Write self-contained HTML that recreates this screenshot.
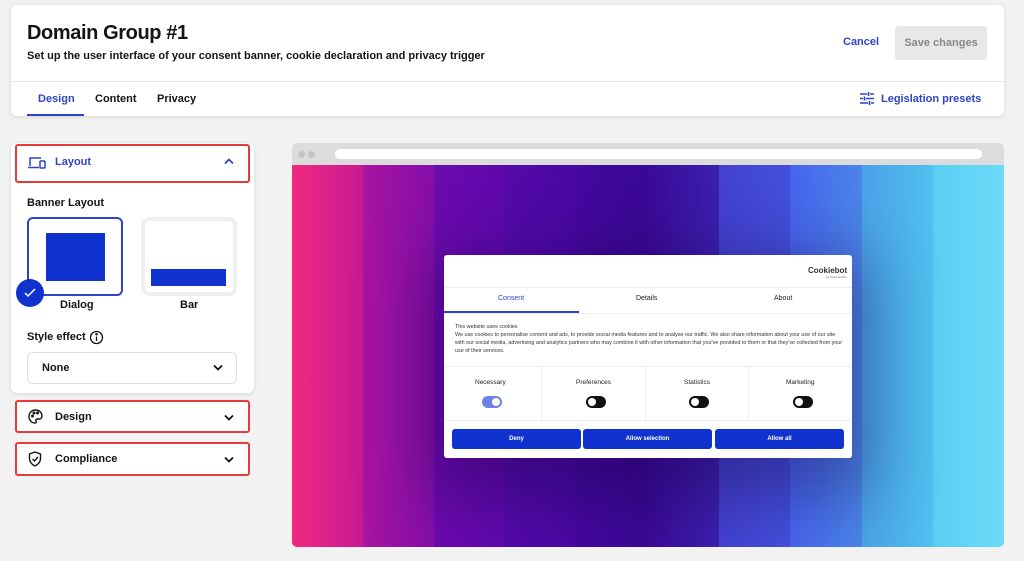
<!DOCTYPE html>
<html><head><style>
*{box-sizing:border-box;margin:0;padding:0}
body{width:1024px;height:561px;background:#f2f2f2;font-family:"Liberation Sans",sans-serif;position:relative;overflow:hidden;color:#141414}
.a{position:absolute}
.card{background:#fff;border-radius:6px;box-shadow:0 1px 4px rgba(0,0,0,.12)}
.red{border:2px solid #e53b3b;border-radius:3px;background:#fff}
.b{font-weight:bold}
.stripe{position:absolute;top:0;bottom:0}
.tg{position:absolute;width:20px;height:12px;border-radius:6px;background:#111}
.tg:after{content:"";position:absolute;left:2px;top:2px;width:8px;height:8px;border-radius:50%;background:#fff}
.btn{position:absolute;top:429px;height:20px;background:#1032cf;border-radius:3px;color:#fff;font-size:6px;font-weight:bold;text-align:center;line-height:20px}
</style></head><body>
<div class="a card" style="left:11px;top:5px;width:993px;height:111px"></div>
<div class="a b" style="left:27px;top:22px;font-size:20px;letter-spacing:-0.4px">Domain Group #1</div>
<div class="a b" style="left:27px;top:50px;font-size:11px">Set up the user interface of your consent banner, cookie declaration and privacy trigger</div>
<div class="a b" style="left:843px;top:36px;font-size:11px;color:#2d44c7">Cancel</div>
<div class="a b" style="left:895px;top:26px;width:92px;height:34px;background:#e8e8e8;border-radius:3px;color:#888;font-size:11px;line-height:34px;text-align:center">Save changes</div>
<div class="a" style="left:11px;top:81px;width:993px;height:1px;background:#e6e6e6"></div>
<div class="a b" style="left:38px;top:93px;font-size:11px;color:#2d44c7">Design</div>
<div class="a" style="left:27px;top:114px;width:57px;height:2px;background:#2d44c7"></div>
<div class="a b" style="left:95px;top:93px;font-size:11px">Content</div>
<div class="a b" style="left:157px;top:93px;font-size:11px">Privacy</div>
<svg class="a" style="left:860px;top:92px" width="14" height="13" viewBox="0 0 14 13" fill="none" stroke="#2d44c7" stroke-width="1.6"><path d="M0 2h7M10 2h4M8.5 0v4M0 6.5h3M6 6.5h8M4.5 4.5v4M0 11h8M11 11h3M9.5 9v4"/></svg>
<div class="a b" style="left:881px;top:93px;font-size:11px;color:#2d44c7">Legislation presets</div>

<div class="a card" style="left:11px;top:143px;width:243px;height:250px"></div>
<div class="a red" style="left:15px;top:144px;width:235px;height:39px"></div>
<svg class="a" style="left:28px;top:157px" width="18" height="12" viewBox="0 0 18 12" fill="none" stroke="#2d44c7" stroke-width="1.5"><path d="M2 9V1h11M0 10.5h11"/><rect x="12" y="4" width="5" height="7" rx="1"/></svg>
<div class="a b" style="left:55px;top:156px;font-size:11px;color:#2d44c7">Layout</div>
<svg class="a" style="left:224px;top:158px" width="10" height="7" viewBox="0 0 10 7" fill="none" stroke="#2d44c7" stroke-width="1.8"><path d="M1 5.5l4-4 4 4"/></svg>
<div class="a b" style="left:27px;top:197px;font-size:11px">Banner Layout</div>
<div class="a" style="left:27px;top:217px;width:96px;height:79px;border:2px solid #2d44c7;border-radius:6px;background:#fff"></div>
<div class="a" style="left:46px;top:233px;width:59px;height:48px;background:#1032cf"></div>
<div class="a" style="left:141px;top:217px;width:96px;height:79px;border:4px solid #efefef;border-radius:8px;background:#fff"></div>
<div class="a" style="left:151px;top:269px;width:75px;height:17px;background:#1032cf"></div>
<div class="a" style="left:16px;top:279px;width:28px;height:28px;border-radius:50%;background:#1032cf"></div>
<svg class="a" style="left:23px;top:287px" width="14" height="11" viewBox="0 0 14 11" fill="none" stroke="#fff" stroke-width="1.5"><path d="M2 6l3 3 7-7"/></svg>
<div class="a b" style="left:60px;top:299px;font-size:11px">Dialog</div>
<div class="a b" style="left:180px;top:299px;font-size:11px">Bar</div>
<div class="a b" style="left:27px;top:331px;font-size:11px">Style effect</div>
<svg class="a" style="left:89px;top:330px" width="15" height="15" viewBox="0 0 15 15" fill="none" stroke="#141414" stroke-width="1.3"><circle cx="7.5" cy="7.5" r="6"/><path d="M7.5 6.5v4.5"/><circle cx="7.5" cy="4.3" r=".6" fill="#141414"/></svg>
<div class="a" style="left:27px;top:352px;width:210px;height:32px;border:1px solid #ddd;border-radius:6px;background:#fff"></div>
<div class="a b" style="left:42px;top:362px;font-size:11px">None</div>
<svg class="a" style="left:213px;top:364px" width="10" height="7" viewBox="0 0 10 7" fill="none" stroke="#141414" stroke-width="1.8"><path d="M1 1.5l4 4 4-4"/></svg>

<div class="a red" style="left:15px;top:400px;width:235px;height:33px"></div>
<svg class="a" style="left:28px;top:409px" width="15" height="15" viewBox="0 0 15 15" fill="none" stroke="#141414" stroke-width="1.4"><path d="M7.5 1C3.5 1 1 4 1 7.5S3.5 14 7 14c1.5 0 1.5-1.2 1-2-.6-1 0-2 1.2-2H11c2 0 3-1.3 3-3C14 3.5 11 1 7.5 1z"/><circle cx="4.5" cy="7" r=".8"/><circle cx="6" cy="4" r=".8"/><circle cx="9.5" cy="4" r=".8"/></svg>
<div class="a b" style="left:55px;top:411px;font-size:11px">Design</div>
<svg class="a" style="left:224px;top:414px" width="10" height="7" viewBox="0 0 10 7" fill="none" stroke="#141414" stroke-width="1.8"><path d="M1 1.5l4 4 4-4"/></svg>
<div class="a red" style="left:15px;top:442px;width:235px;height:34px"></div>
<svg class="a" style="left:28px;top:451px" width="14" height="16" viewBox="0 0 14 16" fill="none" stroke="#141414" stroke-width="1.4"><path d="M7 1l5.5 2v4.5C12.5 11 10 13.5 7 15 4 13.5 1.5 11 1.5 7.5V3z"/><path d="M4.5 8l2 2 3.5-4"/></svg>
<div class="a b" style="left:55px;top:453px;font-size:11px">Compliance</div>
<svg class="a" style="left:224px;top:456px" width="10" height="7" viewBox="0 0 10 7" fill="none" stroke="#141414" stroke-width="1.8"><path d="M1 1.5l4 4 4-4"/></svg>

<div class="a" style="left:292px;top:143px;width:712px;height:404px;border-radius:5px;overflow:hidden;background:#ddd">
 <div class="a" style="left:0;top:0;width:712px;height:22px;background:#dcdcdc"></div>
 <div class="a" style="left:6px;top:8px;width:7px;height:7px;border-radius:50%;background:#c4c4c4"></div>
 <div class="a" style="left:16px;top:8px;width:7px;height:7px;border-radius:50%;background:#c4c4c4"></div>
 <div class="a" style="left:43px;top:6px;width:647px;height:10px;border-radius:5px;background:#fff"></div>
 <div class="a" style="left:0;top:22px;width:712px;height:382px">
  <div class="stripe" style="left:0;width:71px;background:linear-gradient(90deg,#f0287f,#c81a95)"></div>
  <div class="stripe" style="left:71px;width:71px;background:linear-gradient(90deg,#aa14a0,#840eaa)"></div>
  <div class="stripe" style="left:142px;width:71px;background:linear-gradient(90deg,#6c0aae,#5e08ac)"></div>
  <div class="stripe" style="left:213px;width:72px;background:linear-gradient(90deg,#540aa8,#4808a2)"></div>
  <div class="stripe" style="left:285px;width:71px;background:linear-gradient(90deg,#44089e,#3a0894)"></div>
  <div class="stripe" style="left:356px;width:71px;background:linear-gradient(90deg,#3a0a98,#3c20ae)"></div>
  <div class="stripe" style="left:427px;width:71px;background:linear-gradient(90deg,#4440d0,#4250dc)"></div>
  <div class="stripe" style="left:498px;width:72px;background:linear-gradient(90deg,#4763ee,#4a86e8)"></div>
  <div class="stripe" style="left:570px;width:71px;background:linear-gradient(90deg,#4aa2e8,#50c0ee)"></div>
  <div class="stripe" style="left:641px;width:71px;background:linear-gradient(90deg,#58cff2,#6cdafa)"></div>
 </div>
 <div class="a" style="left:152px;top:112px;width:408px;height:203px;box-shadow:0 20px 60px 20px rgba(20,0,60,.35)"></div>
</div>

<div class="a" style="left:444px;top:255px;width:408px;height:203px;background:#fff;border-radius:3px"></div>
<div class="a b" style="left:808px;top:266px;font-size:8px;color:#333">Cookiebot</div>
<div class="a" style="left:826px;top:275px;font-size:3px;color:#666">by Usercentrics</div>
<div class="a" style="left:444px;top:287px;width:408px;height:1px;background:#eee"></div>
<div class="a" style="left:498px;top:295px;font-size:7px;color:#2d44c7">Consent</div>
<div class="a" style="left:636px;top:295px;font-size:7px;color:#222">Details</div>
<div class="a" style="left:774px;top:295px;font-size:7px;color:#222">About</div>
<div class="a" style="left:444px;top:311px;width:135px;height:2px;background:#2d44c7"></div>
<div class="a" style="left:444px;top:313px;width:408px;height:1px;background:#eee"></div>
<div class="a" style="left:455px;top:323px;width:390px;font-size:5.4px;line-height:8px;color:#333">This website uses cookies<br>We use cookies to personalise content and ads, to provide social media features and to analyse our traffic. We also share information about your use of our site with our social media, advertising and analytics partners who may combine it with other information that you've provided to them or that they've collected from your use of their services.</div>
<div class="a" style="left:444px;top:366px;width:408px;height:1px;background:#eee"></div>
<div class="a" style="left:541px;top:367px;width:1px;height:53px;background:#eee"></div>
<div class="a" style="left:645px;top:367px;width:1px;height:53px;background:#eee"></div>
<div class="a" style="left:748px;top:367px;width:1px;height:53px;background:#eee"></div>
<div class="a" style="left:475px;top:379px;font-size:6.5px;color:#222">Necessary</div>
<div class="a" style="left:576px;top:379px;font-size:6.5px;color:#222">Preferences</div>
<div class="a" style="left:684px;top:379px;font-size:6.5px;color:#222">Statistics</div>
<div class="a" style="left:786px;top:379px;font-size:6.5px;color:#222">Marketing</div>
<div class="tg" style="left:482px;top:396px;background:#6c82e6"><div style="position:absolute;right:2px;top:2px;width:8px;height:8px;border-radius:50%;background:#fff"></div></div>
<div class="tg" style="left:586px;top:396px"></div>
<div class="tg" style="left:689px;top:396px"></div>
<div class="tg" style="left:793px;top:396px"></div>
<style>.tg[style*="6c82e6"]:after{display:none}</style>
<div class="a" style="left:444px;top:420px;width:408px;height:1px;background:#eee"></div>
<div class="btn" style="left:452px;width:129px">Deny</div>
<div class="btn" style="left:583px;width:129px">Allow selection</div>
<div class="btn" style="left:715px;width:129px">Allow all</div>
</body></html>
